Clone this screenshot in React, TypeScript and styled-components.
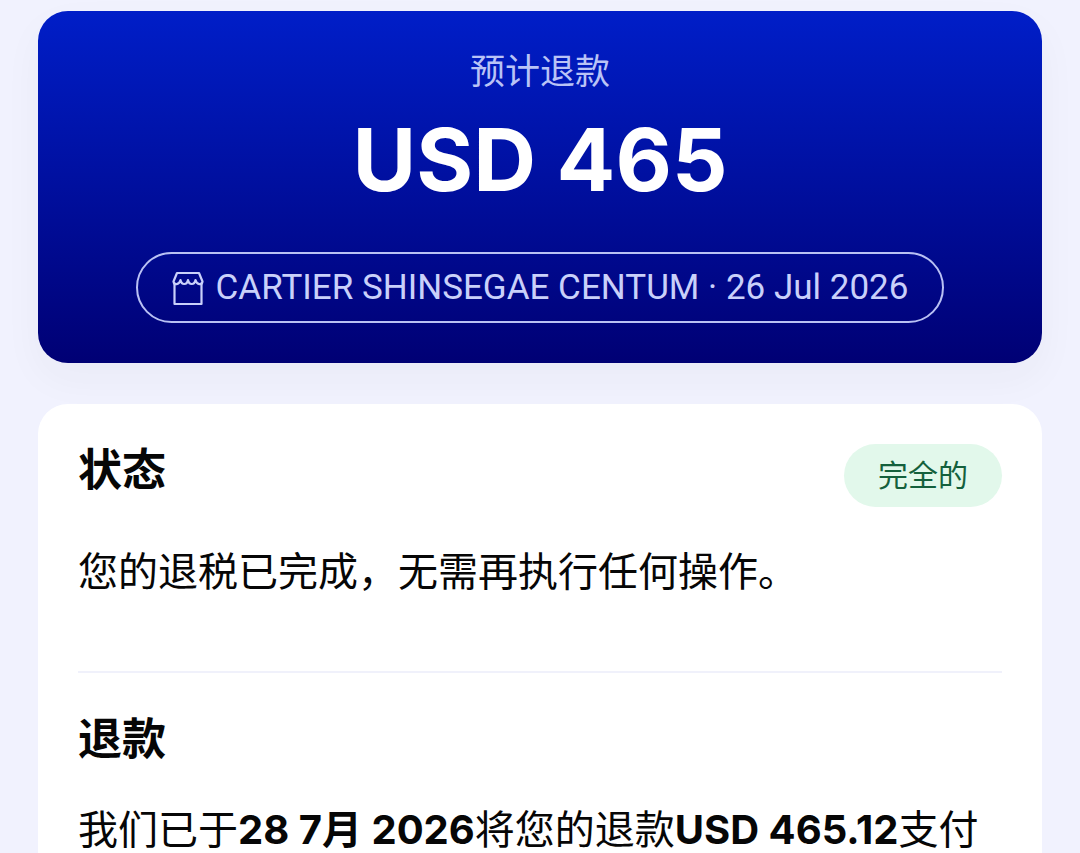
import React from "react";
import styled, { createGlobalStyle } from "styled-components";

const GlobalStyle = createGlobalStyle`
  *, *::before, *::after { box-sizing: border-box; }
  body {
    margin: 0;
    background: #f1f2fe;
    color: #060606;
    font-family: Inter, "Noto Sans CJK SC", sans-serif;
  }
  h2, p { margin: 0; }
`;

const Page = styled.main`
  display: flex;
  flex-direction: column;
  gap: 41px;
  padding: 11px 38px 0;
`;

const RefundCard = styled.section`
  display: flex;
  flex-direction: column;
  align-items: center;
  padding: 34px 40px 40px;
  border-radius: 30px;
  background: linear-gradient(180deg, #001ec8 0%, #000074 100%);
  box-shadow: 0 16px 40px rgba(60, 60, 40, 0.04);
  text-align: center;
`;

const RefundLabel = styled.p`
  color: #b9c3f6;
  font-size: 35px;
  line-height: 52px;
`;

const Amount = styled.p`
  margin-top: 8px;
  color: #fff;
  font-size: 87px;
  font-weight: 700;
  line-height: 110px;
`;

const StorePill = styled.div`
  display: flex;
  align-items: center;
  gap: 12px;
  margin-top: 37px;
  padding: 0 34px;
  border: 2px solid #b9c1f4;
  border-radius: 36px;
  color: #c9d0fa;
  font-family: Roboto, "Noto Sans CJK SC", sans-serif;
  font-size: 35px;
  font-weight: 400;
  line-height: 67px;
  white-space: nowrap;
`;

const StatusCard = styled.section`
  padding: 40px 40px 0;
  border-radius: 30px 30px 0 0;
  background: #fff;
`;

const Block = styled.section`
  & + & {
    margin-top: 71px;
    padding-top: 40px;
    border-top: 2px solid #f0f1fb;
  }
`;

const BlockHeader = styled.header`
  display: flex;
  align-items: flex-start;
  justify-content: space-between;
`;

const Heading = styled.h2`
  font-size: 44px;
  font-weight: 700;
  line-height: 52px;
`;

const Badge = styled.span`
  padding: 0 34px;
  border-radius: 32px;
  background: #e2f8eb;
  color: #14603c;
  font-size: 30px;
  line-height: 63px;
`;

const Body = styled.p`
  margin-top: 37px;
  font-size: 40px;
  line-height: 56px;

  strong { font-weight: 700; }
`;

function StoreIcon() {
  return (
    <svg width="32" height="36" viewBox="0 0 32 36" fill="none" stroke="currentColor" strokeWidth="2.2" strokeLinejoin="round" strokeLinecap="round" aria-hidden="true">
      <path d="M2.500 13.500V34H29.500V13.500" />
      <path d="M5 3H27L30.500 11.500C30 15.300 25 15.300 23.500 10C22.500 15.300 17 15.300 16 10C15 15.300 9.500 15.300 8.500 10C7 15.300 2 15.300 1.500 11.500Z" />
    </svg>
  );
}

export default function App() {
  return (
    <>
      <GlobalStyle />
      <Page lang="zh-CN">
        <RefundCard>
          <RefundLabel>预计退款</RefundLabel>
          <Amount>USD 465</Amount>
          <StorePill>
            <StoreIcon />
            <span>CARTIER SHINSEGAE CENTUM · 26 Jul 2026</span>
          </StorePill>
        </RefundCard>
        <StatusCard>
          <Block>
            <BlockHeader>
              <Heading>状态</Heading>
              <Badge>完全的</Badge>
            </BlockHeader>
            <Body>您的退税已完成，无需再执行任何操作。</Body>
          </Block>
          <Block>
            <Heading>退款</Heading>
            <Body>
              我们已于<strong>28 7月 2026</strong>将您的退款<strong>USD 465.12</strong>支付
            </Body>
          </Block>
        </StatusCard>
      </Page>
    </>
  );
}
